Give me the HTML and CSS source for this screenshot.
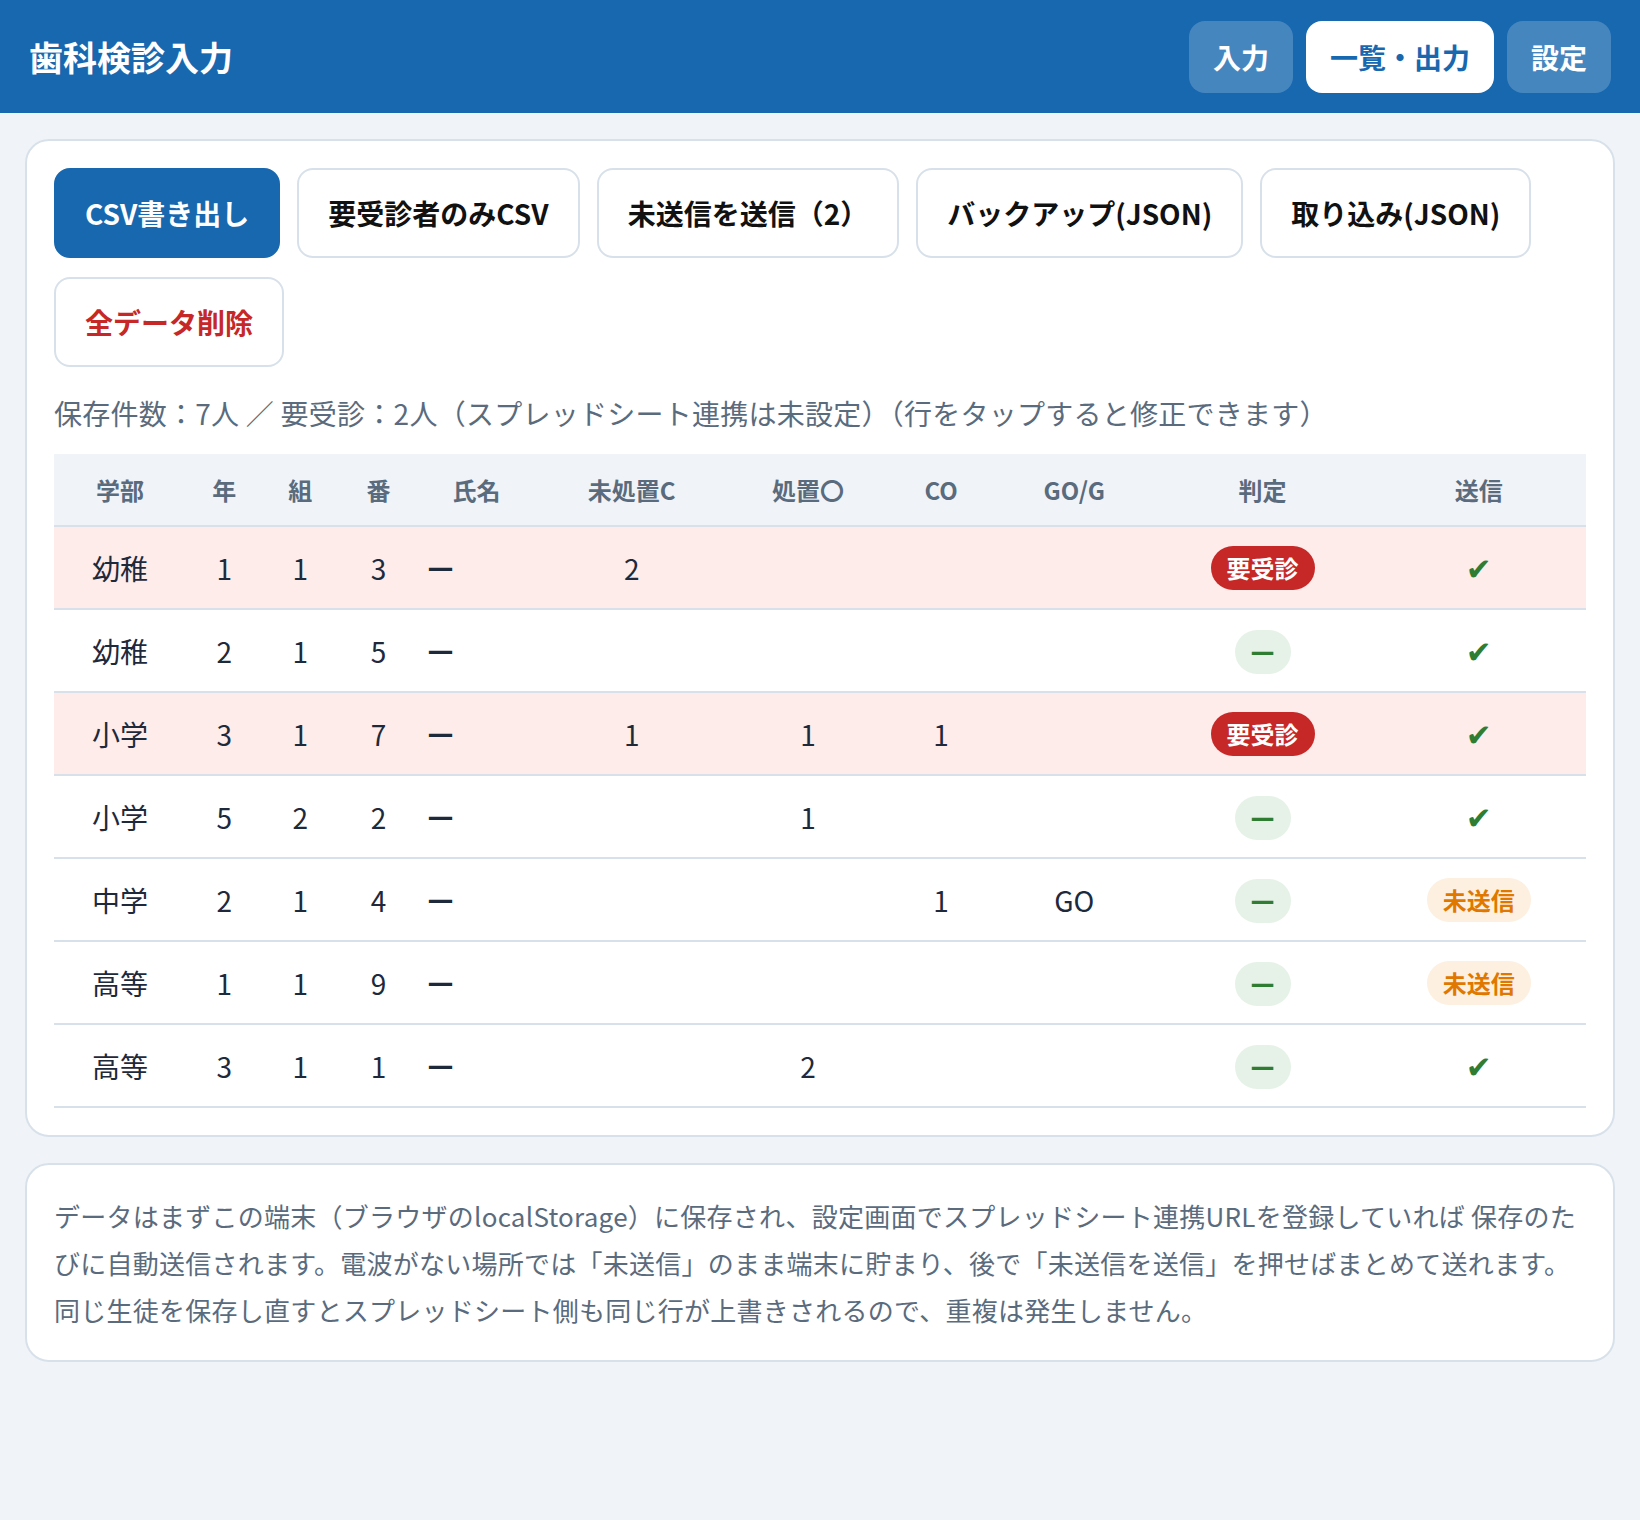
FILE: index.html
```html
<!DOCTYPE html>
<html lang="ja">
<head>
    <meta charset="UTF-8">
    <meta name="viewport" content="width=device-width, initial-scale=1.0">
    <title>歯科検診入力</title>
    <link rel="stylesheet" href="styles.css">
</head>
<body>
    <header class="app-header">
        <h1 class="app-title">歯科検診入力</h1>
        <nav class="app-nav">
            <button class="nav-btn">入力</button>
            <button class="nav-btn active">一覧・出力</button>
            <button class="nav-btn">設定</button>
        </nav>
    </header>

    <main class="app-main">
        <section class="card">
            <div class="action-bar">
                <button class="action-btn primary">CSV書き出し</button>
                <button class="action-btn">要受診者のみCSV</button>
                <button class="action-btn">未送信を送信（2）</button>
                <button class="action-btn">バックアップ(JSON)</button>
                <button class="action-btn">取り込み(JSON)</button>
                <button class="action-btn danger">全データ削除</button>
            </div>

            <p class="summary">保存件数：7人 ／ 要受診：2人（スプレッドシート連携は未設定）（行をタップすると修正できます）</p>

            <table class="record-table">
                <colgroup>
                    <col class="c-dept">
                    <col class="c-num">
                    <col class="c-num">
                    <col class="c-no">
                    <col class="c-name">
                    <col class="c-untreated">
                    <col class="c-treated">
                    <col class="c-co">
                    <col class="c-go">
                    <col class="c-judge">
                    <col class="c-send">
                </colgroup>
                <thead>
                    <tr>
                        <th>学部</th>
                        <th>年</th>
                        <th>組</th>
                        <th>番</th>
                        <th>氏名</th>
                        <th>未処置C</th>
                        <th>処置〇</th>
                        <th>CO</th>
                        <th>GO/G</th>
                        <th>判定</th>
                        <th>送信</th>
                    </tr>
                </thead>
                <tbody>
                    <tr class="need">
                        <td>幼稚</td><td>1</td><td>1</td><td>3</td><td class="name">—</td>
                        <td>2</td><td></td><td></td><td></td>
                        <td><span class="badge badge-need">要受診</span></td>
                        <td><span class="check">✔</span></td>
                    </tr>
                    <tr>
                        <td>幼稚</td><td>2</td><td>1</td><td>5</td><td class="name">—</td>
                        <td></td><td></td><td></td><td></td>
                        <td><span class="badge badge-ok">—</span></td>
                        <td><span class="check">✔</span></td>
                    </tr>
                    <tr class="need">
                        <td>小学</td><td>3</td><td>1</td><td>7</td><td class="name">—</td>
                        <td>1</td><td>1</td><td>1</td><td></td>
                        <td><span class="badge badge-need">要受診</span></td>
                        <td><span class="check">✔</span></td>
                    </tr>
                    <tr>
                        <td>小学</td><td>5</td><td>2</td><td>2</td><td class="name">—</td>
                        <td></td><td>1</td><td></td><td></td>
                        <td><span class="badge badge-ok">—</span></td>
                        <td><span class="check">✔</span></td>
                    </tr>
                    <tr>
                        <td>中学</td><td>2</td><td>1</td><td>4</td><td class="name">—</td>
                        <td></td><td></td><td>1</td><td>GO</td>
                        <td><span class="badge badge-ok">—</span></td>
                        <td><span class="badge badge-pending">未送信</span></td>
                    </tr>
                    <tr>
                        <td>高等</td><td>1</td><td>1</td><td>9</td><td class="name">—</td>
                        <td></td><td></td><td></td><td></td>
                        <td><span class="badge badge-ok">—</span></td>
                        <td><span class="badge badge-pending">未送信</span></td>
                    </tr>
                    <tr>
                        <td>高等</td><td>3</td><td>1</td><td>1</td><td class="name">—</td>
                        <td></td><td>2</td><td></td><td></td>
                        <td><span class="badge badge-ok">—</span></td>
                        <td><span class="check">✔</span></td>
                    </tr>
                </tbody>
            </table>
        </section>

        <section class="card note">
            <p>データはまずこの端末（ブラウザのlocalStorage）に保存され、設定画面でスプレッドシート連携URLを登録していれば 保存のたびに自動送信されます。電波がない場所では「未送信」のまま端末に貯まり、後で「未送信を送信」を押せばまとめて送れます。<br>同じ生徒を保存し直すとスプレッドシート側も同じ行が上書きされるので、重複は発生しません。</p>
        </section>
    </main>
</body>
</html>
```

FILE: styles.css
```css
:root {
    --bg-color: #f0f4f8;
    --primary-color: #1868b0;
    --text-color: #1e293b;
    --muted-color: #5a6b7d;
    --border-color: #d8e1ea;
    --danger-color: #c62828;
    --ok-color: #2e7d32;
    --warn-color: #e07800;
}

* {
    box-sizing: border-box;
}

body {
    font-family: "Noto Sans CJK JP", "Noto Sans", sans-serif;
    background-color: var(--bg-color);
    color: var(--text-color);
    margin: 0;
    padding: 0;
    min-height: 100vh;
}

/* ヘッダー */
.app-header {
    background-color: var(--primary-color);
    height: 113px;
    padding: 0 29px;
    display: flex;
    align-items: center;
    justify-content: space-between;
}

.app-title {
    margin: 0;
    color: white;
    font-size: 34px;
    font-weight: 700;
}

.app-nav {
    display: flex;
    gap: 13px;
}

.nav-btn {
    font-family: inherit;
    font-size: 28px;
    font-weight: 700;
    line-height: 42px;
    padding: 15px 24px;
    border: none;
    border-radius: 16px;
    background-color: rgba(255, 255, 255, 0.2);
    color: white;
    cursor: pointer;
}

.nav-btn.active {
    background-color: white;
    color: var(--primary-color);
}

/* メイン */
.app-main {
    padding: 26px 25px;
    display: flex;
    flex-direction: column;
    gap: 26px;
}

.card {
    background-color: white;
    border: 2px solid var(--border-color);
    border-radius: 24px;
    padding: 27px;
}

.action-bar {
    display: flex;
    flex-wrap: wrap;
    gap: 19px 17px;
}

.action-btn {
    font-family: inherit;
    font-size: 28px;
    font-weight: 700;
    line-height: 42px;
    padding: 22px 29px;
    border: 2px solid var(--border-color);
    border-radius: 16px;
    background-color: white;
    color: #111;
    cursor: pointer;
}

.action-btn.primary {
    background-color: var(--primary-color);
    border-color: var(--primary-color);
    color: white;
}

.action-btn.danger {
    color: var(--danger-color);
}

.summary {
    margin: 25px 0 20px;
    font-size: 28px;
    line-height: 42px;
    letter-spacing: 0.25px;
    color: var(--muted-color);
}

/* 一覧テーブル */
.record-table {
    width: 100%;
    table-layout: fixed;
    border-collapse: separate;
    border-spacing: 0;
}

.c-dept { width: 132px; }
.c-num { width: 76px; }
.c-no { width: 80px; }
.c-name { width: 116px; }
.c-untreated { width: 194px; }
.c-treated { width: 158px; }
.c-co { width: 108px; }
.c-go { width: 158px; }
.c-judge { width: 218px; }
.c-send { width: 214px; }

.record-table th {
    background-color: var(--bg-color);
    color: var(--muted-color);
    font-size: 24px;
    font-weight: 700;
    height: 73px;
    padding: 0;
    text-align: center;
    border-bottom: 2px solid var(--border-color);
}

.record-table td {
    height: 83px;
    padding: 0;
    font-size: 28px;
    text-align: center;
    border-bottom: 2px solid var(--border-color);
}

.record-table td.name {
    text-align: left;
    padding-left: 9px;
    font-family: "DejaVu Sans", sans-serif;
    font-size: 26px;
    font-weight: 700;
}

.record-table tr.need td {
    background-color: #fdecea;
}

.badge {
    display: inline-block;
    font-size: 24px;
    font-weight: 700;
    line-height: 44px;
    padding: 0 16px;
    border-radius: 22px;
}

.badge-need {
    background-color: var(--danger-color);
    color: white;
}

.badge-ok {
    font-family: "DejaVu Sans", sans-serif;
    background-color: #e6f2e7;
    color: var(--ok-color);
}

.badge-pending {
    background-color: #fdf0e0;
    color: var(--warn-color);
}

.check {
    font-family: "DejaVu Sans", sans-serif;
    font-size: 31px;
    color: var(--ok-color);
}

.note p {
    margin: 0;
    font-size: 26px;
    line-height: 47px;
    letter-spacing: 0.25px;
    color: var(--muted-color);
}
```
